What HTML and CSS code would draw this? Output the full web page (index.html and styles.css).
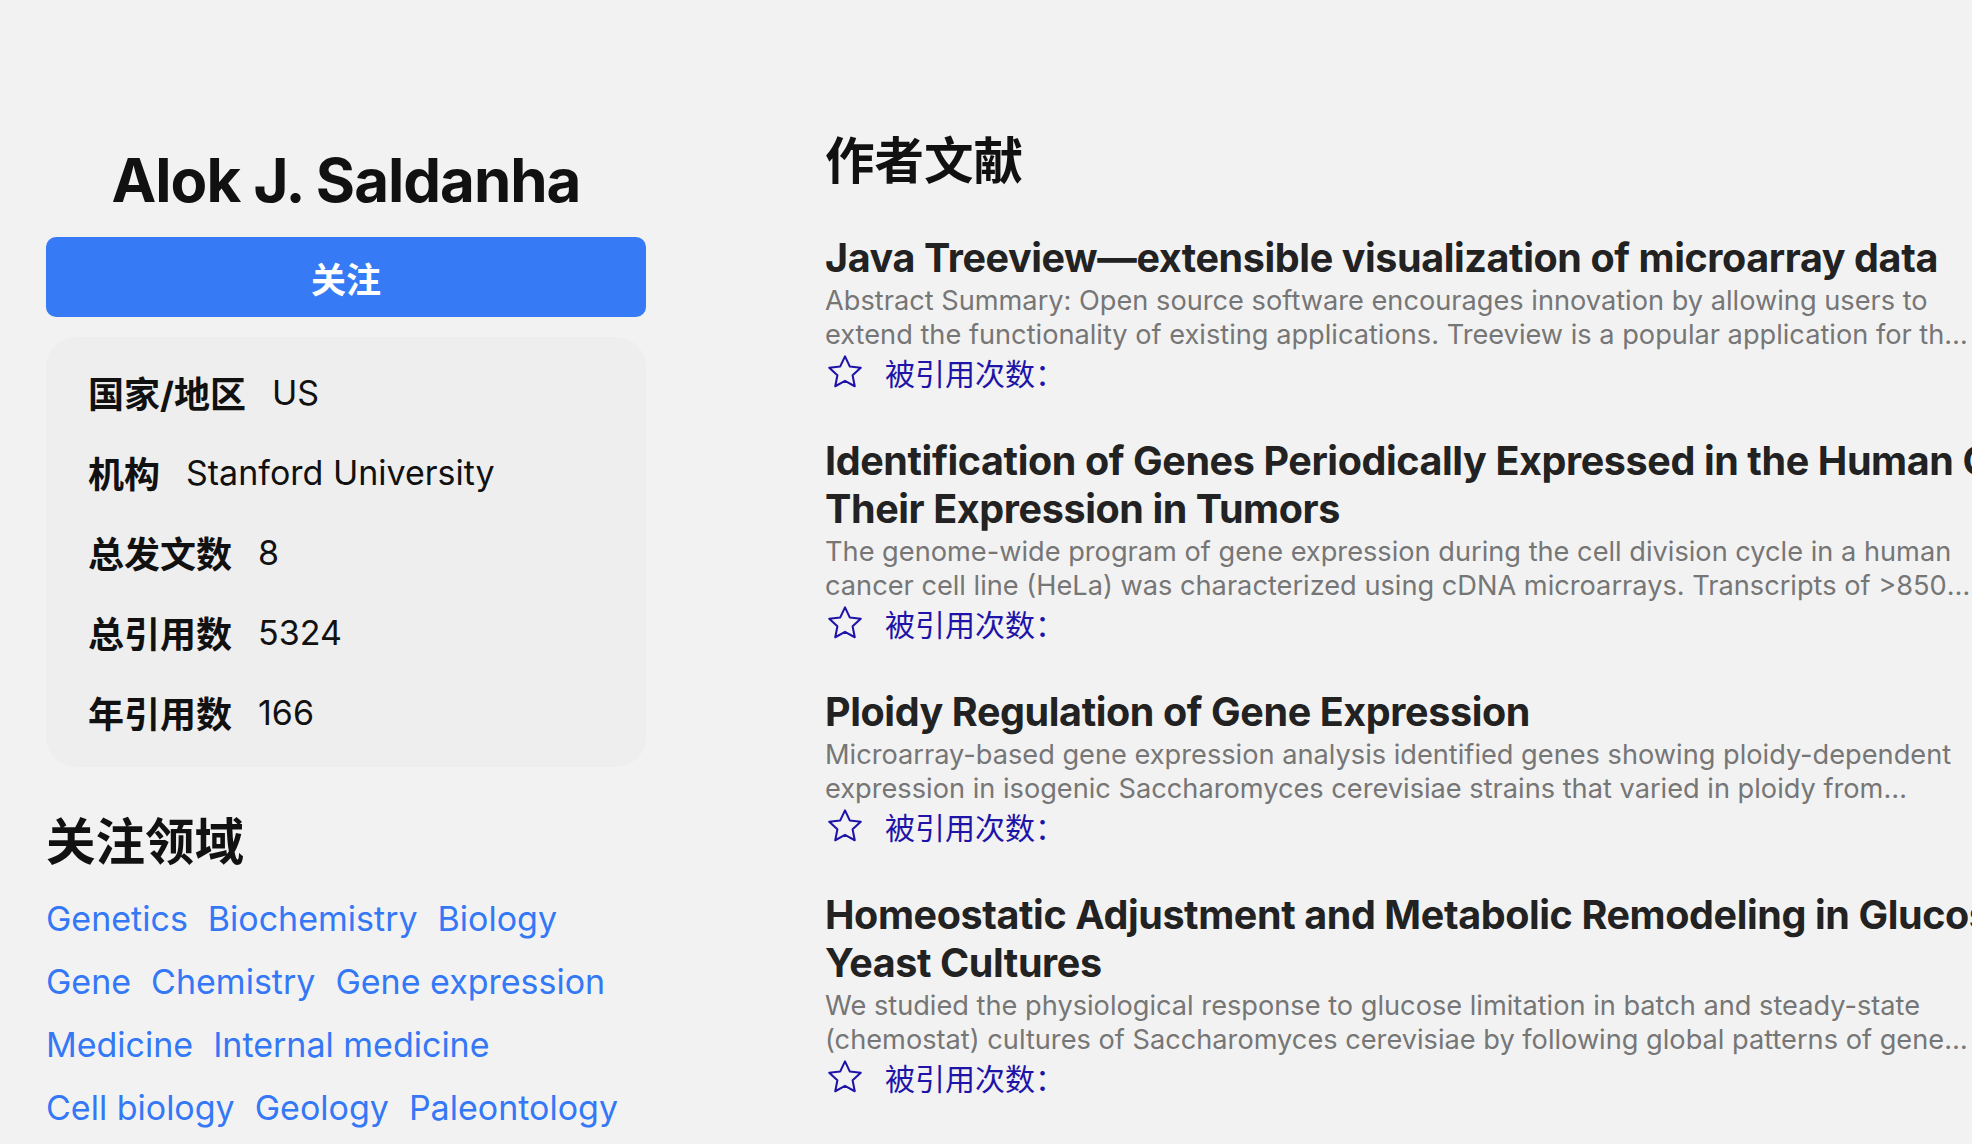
FILE: index.html
```html
<!DOCTYPE html>
<html lang="zh-CN">
<head>
<meta charset="utf-8">
<title>Alok J. Saldanha</title>
<link rel="stylesheet" href="styles.css">
</head>
<body>
<div class="page">
  <aside class="profile">
    <h1 class="profile-name">Alok J. Saldanha</h1>
    <button class="follow-btn" type="button">关注</button>
    <dl class="info-card">
      <div class="info-row"><dt>国家/地区</dt><dd>US</dd></div>
      <div class="info-row"><dt>机构</dt><dd>Stanford University</dd></div>
      <div class="info-row"><dt>总发文数</dt><dd>8</dd></div>
      <div class="info-row"><dt>总引用数</dt><dd>5324</dd></div>
      <div class="info-row"><dt>年引用数</dt><dd>166</dd></div>
    </dl>
    <h2 class="section-title fields-title">关注领域</h2>
    <div class="tags">
      <a class="tag" href="#">Genetics</a>
      <a class="tag" href="#">Biochemistry</a>
      <a class="tag" href="#">Biology</a>
      <a class="tag" href="#">Gene</a>
      <a class="tag" href="#">Chemistry</a>
      <a class="tag" href="#">Gene expression</a>
      <a class="tag" href="#">Medicine</a>
      <a class="tag" href="#">Internal medicine</a>
      <a class="tag" href="#">Cell biology</a>
      <a class="tag" href="#">Geology</a>
      <a class="tag" href="#">Paleontology</a>
    </div>
  </aside>

  <main class="papers">
    <h2 class="section-title papers-title">作者文献</h2>

    <article class="paper">
      <h3 class="paper-title">Java Treeview—extensible visualization of microarray data</h3>
      <p class="paper-abstract">Abstract Summary: Open source software encourages innovation by allowing users to extend the functionality of existing applications. Treeview is a popular application for the visualization of microarray data, but is closed-source and platform-specific, which limits both its current utility and suitability as a platform for further development.</p>
      <div class="paper-cite">
        <svg class="star" viewBox="0 0 24 24" width="40" height="40" aria-hidden="true"><path d="M12 2.6l2.85 6.05 6.6.8-4.88 4.55 1.28 6.55L12 17.3l-5.85 3.25 1.28-6.55L2.55 9.45l6.6-.8z" fill="none" stroke="currentColor" stroke-width="1.25" stroke-linejoin="round"/></svg>
        <span>被引用次数：</span>
      </div>
    </article>

    <article class="paper">
      <h3 class="paper-title">Identification of Genes Periodically Expressed in the Human Cell Cycle and Their Expression in Tumors</h3>
      <p class="paper-abstract">The genome-wide program of gene expression during the cell division cycle in a human cancer cell line (HeLa) was characterized using cDNA microarrays. Transcripts of &gt;850 genes showed periodic variation during the cell cycle.</p>
      <div class="paper-cite">
        <svg class="star" viewBox="0 0 24 24" width="40" height="40" aria-hidden="true"><path d="M12 2.6l2.85 6.05 6.6.8-4.88 4.55 1.28 6.55L12 17.3l-5.85 3.25 1.28-6.55L2.55 9.45l6.6-.8z" fill="none" stroke="currentColor" stroke-width="1.25" stroke-linejoin="round"/></svg>
        <span>被引用次数：</span>
      </div>
    </article>

    <article class="paper">
      <h3 class="paper-title">Ploidy Regulation of Gene Expression</h3>
      <p class="paper-abstract">Microarray-based gene expression analysis identified genes showing ploidy-dependent expression in isogenic Saccharomyces cerevisiae strains that varied in ploidy from haploid to tetraploid.</p>
      <div class="paper-cite">
        <svg class="star" viewBox="0 0 24 24" width="40" height="40" aria-hidden="true"><path d="M12 2.6l2.85 6.05 6.6.8-4.88 4.55 1.28 6.55L12 17.3l-5.85 3.25 1.28-6.55L2.55 9.45l6.6-.8z" fill="none" stroke="currentColor" stroke-width="1.25" stroke-linejoin="round"/></svg>
        <span>被引用次数：</span>
      </div>
    </article>

    <article class="paper">
      <h3 class="paper-title">Homeostatic Adjustment and Metabolic Remodeling in Glucose-Limited Yeast Cultures</h3>
      <p class="paper-abstract">We studied the physiological response to glucose limitation in batch and steady-state (chemostat) cultures of Saccharomyces cerevisiae by following global patterns of gene expression.</p>
      <div class="paper-cite">
        <svg class="star" viewBox="0 0 24 24" width="40" height="40" aria-hidden="true"><path d="M12 2.6l2.85 6.05 6.6.8-4.88 4.55 1.28 6.55L12 17.3l-5.85 3.25 1.28-6.55L2.55 9.45l6.6-.8z" fill="none" stroke="currentColor" stroke-width="1.25" stroke-linejoin="round"/></svg>
        <span>被引用次数：</span>
      </div>
    </article>
  </main>
</div>
</body>
</html>
```

FILE: styles.css
```css
html, body {
  margin: 0;
  padding: 0;
  overflow: hidden;
  background: #f2f2f2;
}

body {
  font-family: "Inter", "Noto Sans CJK SC", sans-serif;
  color: #111;
}

.page {
  display: flex;
  align-items: flex-start;
  gap: 179px;
  padding: 132px 0 0 46px;
}

/* ---------- left profile column ---------- */
.profile {
  flex: none;
  width: 600px;
  display: flex;
  flex-direction: column;
  padding-top: 12px;
}

.profile-name {
  margin: 0;
  font-size: 60px;
  line-height: 72px;
  font-weight: 700;
  letter-spacing: -1px;
  text-align: center;
  color: #111;
}

.follow-btn {
  margin-top: 21px;
  height: 80px;
  border: none;
  border-radius: 10px;
  background: #367bf5;
  color: #fff;
  font-family: "Inter", "Noto Sans CJK SC", sans-serif;
  font-size: 35px;
  font-weight: 700;
  cursor: pointer;
}

.info-card {
  margin: 20px 0 0;
  padding: 15px 42px;
  background: #eeeeee;
  border-radius: 30px;
}

.info-row {
  display: flex;
  align-items: center;
  height: 80px;
  font-size: 34px;
}

.info-row dt {
  font-size: 36px;
  font-weight: 700;
  margin-right: 26px;
}

.info-row dd {
  margin: 0;
  font-weight: 400;
}

.section-title {
  margin: 0;
  font-size: 49.5px;
  font-weight: 700;
  line-height: 58px;
  color: #111;
}

.fields-title {
  margin-top: 46px;
}

.tags {
  margin-top: 16px;
  display: flex;
  flex-wrap: wrap;
  column-gap: 20px;
}

.tag {
  font-size: 34px;
  line-height: 63px;
  color: #3478f6;
  text-decoration: none;
}

/* ---------- right papers column ---------- */
.papers {
  flex: none;
  width: 1147px;
}

.papers-title {
  margin-bottom: 44px;
}

.paper {
  margin-bottom: 45px;
}

.paper-title {
  margin: 0;
  width: 1435px;
  font-size: 39.5px;
  line-height: 48px;
  font-weight: 700;
  letter-spacing: -0.4px;
  color: #222;
}

.paper-abstract {
  margin: 2px 0 0;
  font-size: 27.2px;
  line-height: 34px;
  color: #767676;
  display: -webkit-box;
  -webkit-line-clamp: 2;
  -webkit-box-orient: vertical;
  overflow: hidden;
  text-overflow: ellipsis;
}

.paper-cite {
  display: flex;
  align-items: center;
  gap: 20px;
  height: 40px;
  color: #1f14a8;
  font-size: 30px;
}

.star {
  flex: none;
  display: block;
}
```
